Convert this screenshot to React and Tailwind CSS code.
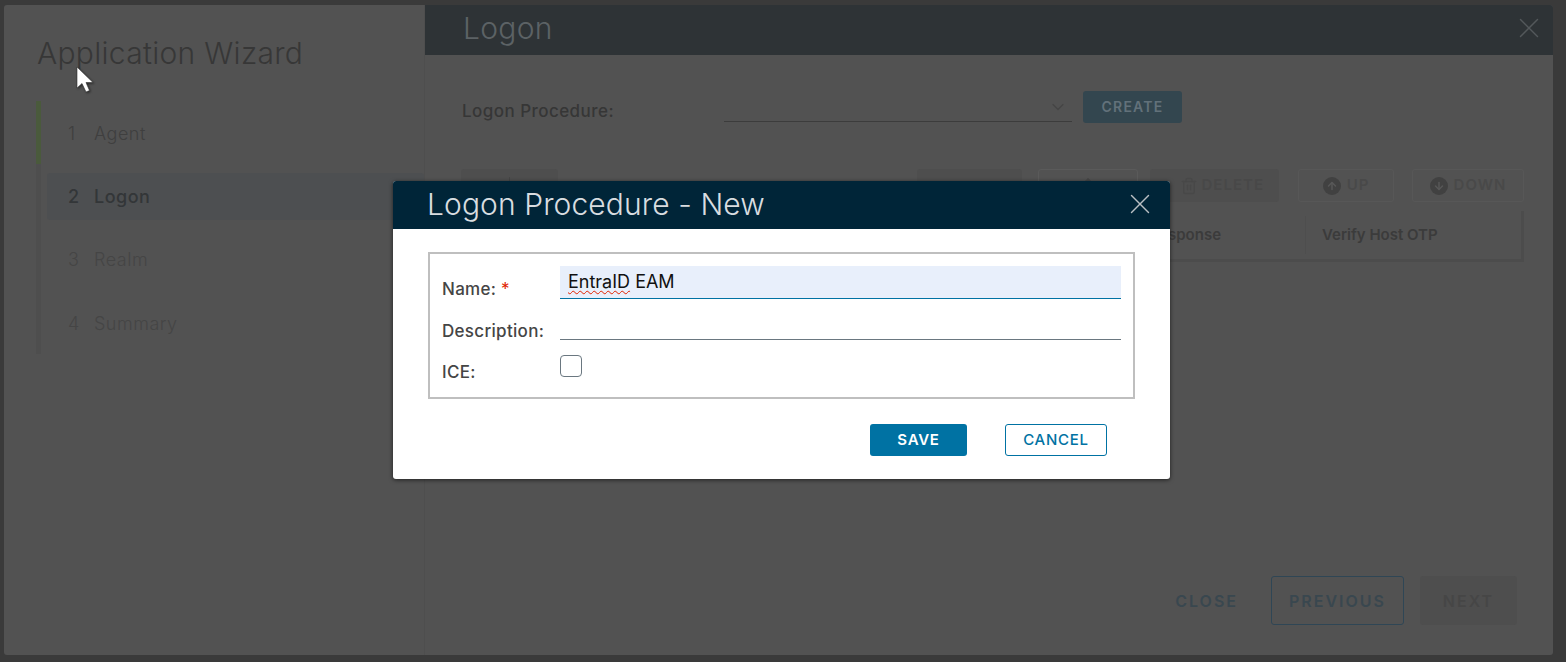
import React from 'react';
import { X, ChevronDown, ArrowUp, ArrowDown, Trash2 } from 'lucide-react';

const steps = [
  { num: '1', name: 'Agent', cls: 'text-[#3f3f3f] font-light' },
  { num: '2', name: 'Logon', cls: 'text-[#333638] font-medium bg-[#4d4f51] rounded-[3px]' },
  { num: '3', name: 'Realm', cls: 'text-[#454545] font-light' },
  { num: '4', name: 'Summary', cls: 'text-[#454545] font-light' },
];

const font = "font-['Inter','Noto_Sans',sans-serif]";

function GhostButton({ label, Icon, width }) {
  return (
    <div className={`h-[33px] ${width} flex items-center justify-center gap-[6px] rounded-[3px] border border-[#575757] text-[15px] font-semibold tracking-[1px] text-[#494949]`}>
      <span className="w-[18px] h-[18px] rounded-full bg-[#414141] flex items-center justify-center">
        <Icon className="w-3 h-3 text-[#575757]" strokeWidth={3} />
      </span>
      {label}
    </div>
  );
}

export default function App() {
  return (
    <div className={`relative h-[662px] w-[1566px] overflow-hidden bg-[#3a3a3a] pt-[5px] pl-1 pr-[13px] pb-[7px] ${font}`}>
      <div className="flex h-full rounded-[3px] bg-[#525252] overflow-hidden">
        {/* Wizard sidebar */}
        <div className="w-[421px] shrink-0 border-r border-[#4e4e4e] pl-[32px] pt-[30px]">
          <div className="pl-px text-[30px] leading-9 font-light tracking-[0.3px] text-[#373737]">Application Wizard</div>
          <div className="mt-[30px] border-l-[5px] border-[#4e4e4e] h-[253px] relative">
            <div className="absolute -left-[5px] top-0 h-[63px] w-[5px] bg-[#4a5a3c]" />
            {steps.map((step) => (
              <div key={step.num} className="h-[63.4px] flex items-center ml-[6px]">
                <div className={`flex-1 flex items-center h-[47px] pl-[21px] pt-[1px] text-[18px] tracking-[0.5px] ${step.cls}`}>
                  <span className="w-[26px]">{step.num}</span>
                  <span>{step.name}</span>
                </div>
              </div>
            ))}
          </div>
        </div>

        {/* Step content */}
        <div className="flex-1 flex flex-col">
          <div className="h-[50px] bg-[#2e3336] flex items-center justify-between pl-[38px] pr-[7px]">
            <span className="text-[30px] font-light leading-9 -mt-[5px] tracking-[0.3px] text-[#5c6265]">Logon</span>
            <X className="w-[34px] h-[34px] -mt-[4px] text-[#53585b]" strokeWidth={1} />
          </div>

          <div className="flex items-center pl-[37px] mt-[36px] h-[32px]">
            <span className="w-[262px] pt-[9px] text-[17px] font-medium tracking-[0.45px] text-[#363636]">Logon Procedure:</span>
            <div className="w-[348px] h-[30px] border-b border-[#3c3c3c] flex items-center justify-end pr-[4px]">
              <ChevronDown className="w-5 h-5 text-[#454545]" strokeWidth={1.5} />
            </div>
            <div className="ml-[11px] w-[99px] h-[32px] rounded-[3px] bg-[#33464f] flex items-center justify-center text-[14px] font-semibold tracking-[1.2px] text-[#62717a]">
              <span className="-mt-[1px]">CREATE</span>
            </div>
          </div>

          <div className="flex items-center mt-[46px] pl-[36px] pr-[29px]">
            <div className="w-[97px] h-[33px] rounded-[3px] bg-[#4e4e4e] flex justify-center pt-[8px]">
              <div className="w-px h-[8px] bg-[#454545]" />
            </div>
            <div className="ml-auto flex items-center">
              <div className="w-[105px] h-[33px] rounded-[3px] bg-[#4e4e4e]" />
              <div className="ml-[16px] w-[100px] h-[33px] rounded-[3px] border border-[#5a5a5a] flex justify-center pt-[6px]">
                <ArrowUp className="w-4 h-4 text-[#474747]" strokeWidth={3} />
              </div>
              <div className="ml-[12px] w-[129px] h-[33px] rounded-[3px] bg-[#4e4e4e] flex items-center justify-end pr-[15px] gap-[4px] text-[15px] font-semibold tracking-[1px] text-[#484848]">
                <Trash2 className="w-[18px] h-[18px]" />
                DELETE
              </div>
              <div className="ml-[19px]">
                <GhostButton label="UP" Icon={ArrowUp} width="w-[96px]" />
              </div>
              <div className="ml-[18px]">
                <GhostButton label="DOWN" Icon={ArrowDown} width="w-[112px]" />
              </div>
            </div>
          </div>

          <div className="mt-[9px] ml-[36px] mr-[29px] h-[51px] border-b-[3px] border-r-[3px] border-[#4c4c4c] flex items-center justify-end text-[15px] font-semibold text-[#3b3b3b]">
            <span className="mr-[84px]">Response</span>
            <span className="h-[38px] border-l border-[#4e4e4e] flex items-center pl-[16px] w-[216px]">Verify Host OTP</span>
          </div>

          {/* Wizard footer */}
          <div className="mt-auto mb-[30px] pr-[36px] flex items-center justify-end text-[16px] font-semibold tracking-[2px]">
            <span className="text-[#39474f] mr-[33px]">CLOSE</span>
            <div className="w-[133px] h-[49px] mr-[16px] rounded-[3px] border border-[#2f4655] flex items-center justify-center text-[#39474f]">
              PREVIOUS
            </div>
            <div className="w-[97px] h-[49px] rounded-[3px] bg-[#4e4e4e] flex items-center justify-center text-[#464646]">
              NEXT
            </div>
          </div>
        </div>
      </div>

      {/* Mouse pointer */}
      <svg className="absolute left-[76px] top-[66px] drop-shadow-[1px_1px_1px_rgba(0,0,0,0.5)]" width="19" height="28" viewBox="0 0 19 28">
        <path d="M1 1 L1 22 L6 17.5 L10 26 L13.5 24.5 L10 16.5 L17 16.5 Z" fill="#ffffff" stroke="#333333" strokeWidth="0.6" />
      </svg>

      {/* Modal */}
      <div className="absolute left-[393px] top-[181px] w-[777px] h-[298px] rounded-[3px] bg-white shadow-[0_1px_4px_rgba(0,0,0,0.6)] overflow-hidden">
        <div className="h-[48px] bg-[#002538] flex items-center justify-between pl-[34px] pr-[13px]">
          <span className="text-[30px] font-light tracking-[0.1px] -mt-[1px] text-[#d9dde0]">Logon Procedure - New</span>
          <X className="w-[34px] h-[34px] -mt-[2px] text-[#b9bfc3]" strokeWidth={1} />
        </div>
        <div className="mx-[35px] mt-[23px] h-[147px] border-2 border-[#bfbfbf] px-[12px] pt-[12px]">
          <div className="flex h-[33px]">
            <div className="w-[118px] pt-[11px] text-[17px] font-medium tracking-[0.3px] text-[#454545]">
              Name: <span className="font-normal text-[#e02200]">*</span>
            </div>
            <div className="flex-1 bg-[#e8effb] border-b border-[#0072a3] pl-[8px] text-[18px] text-[#111111] leading-[31px]">
              <span className="underline decoration-wavy decoration-[#e02200] decoration-1 underline-offset-2">EntraID</span> EAM
            </div>
          </div>
          <div className="flex h-[41px]">
            <div className="w-[118px] pt-[20px] text-[17px] font-medium tracking-[0.3px] text-[#454545]">Description:</div>
            <div className="flex-1 border-b border-[#6a7780]" />
          </div>
          <div className="flex mt-[15px]">
            <div className="w-[118px] pt-[5px] text-[17px] font-medium tracking-[0.3px] text-[#454545]">ICE:</div>
            <div className="w-[22px] h-[22px] rounded-[4px] border border-[#6a7780] bg-white" />
          </div>
        </div>
        <div className="mt-[25px] flex justify-end pr-[63px] text-[15px] font-semibold tracking-wider">
          <div className="w-[97px] h-[32px] rounded-[3px] bg-[#0072a3] text-white flex items-center justify-center">SAVE</div>
          <div className="ml-[38px] w-[102px] h-[32px] rounded-[3px] border border-[#0072a3] text-[#0072a3] font-medium flex items-center justify-center">CANCEL</div>
        </div>
      </div>
    </div>
  );
}
